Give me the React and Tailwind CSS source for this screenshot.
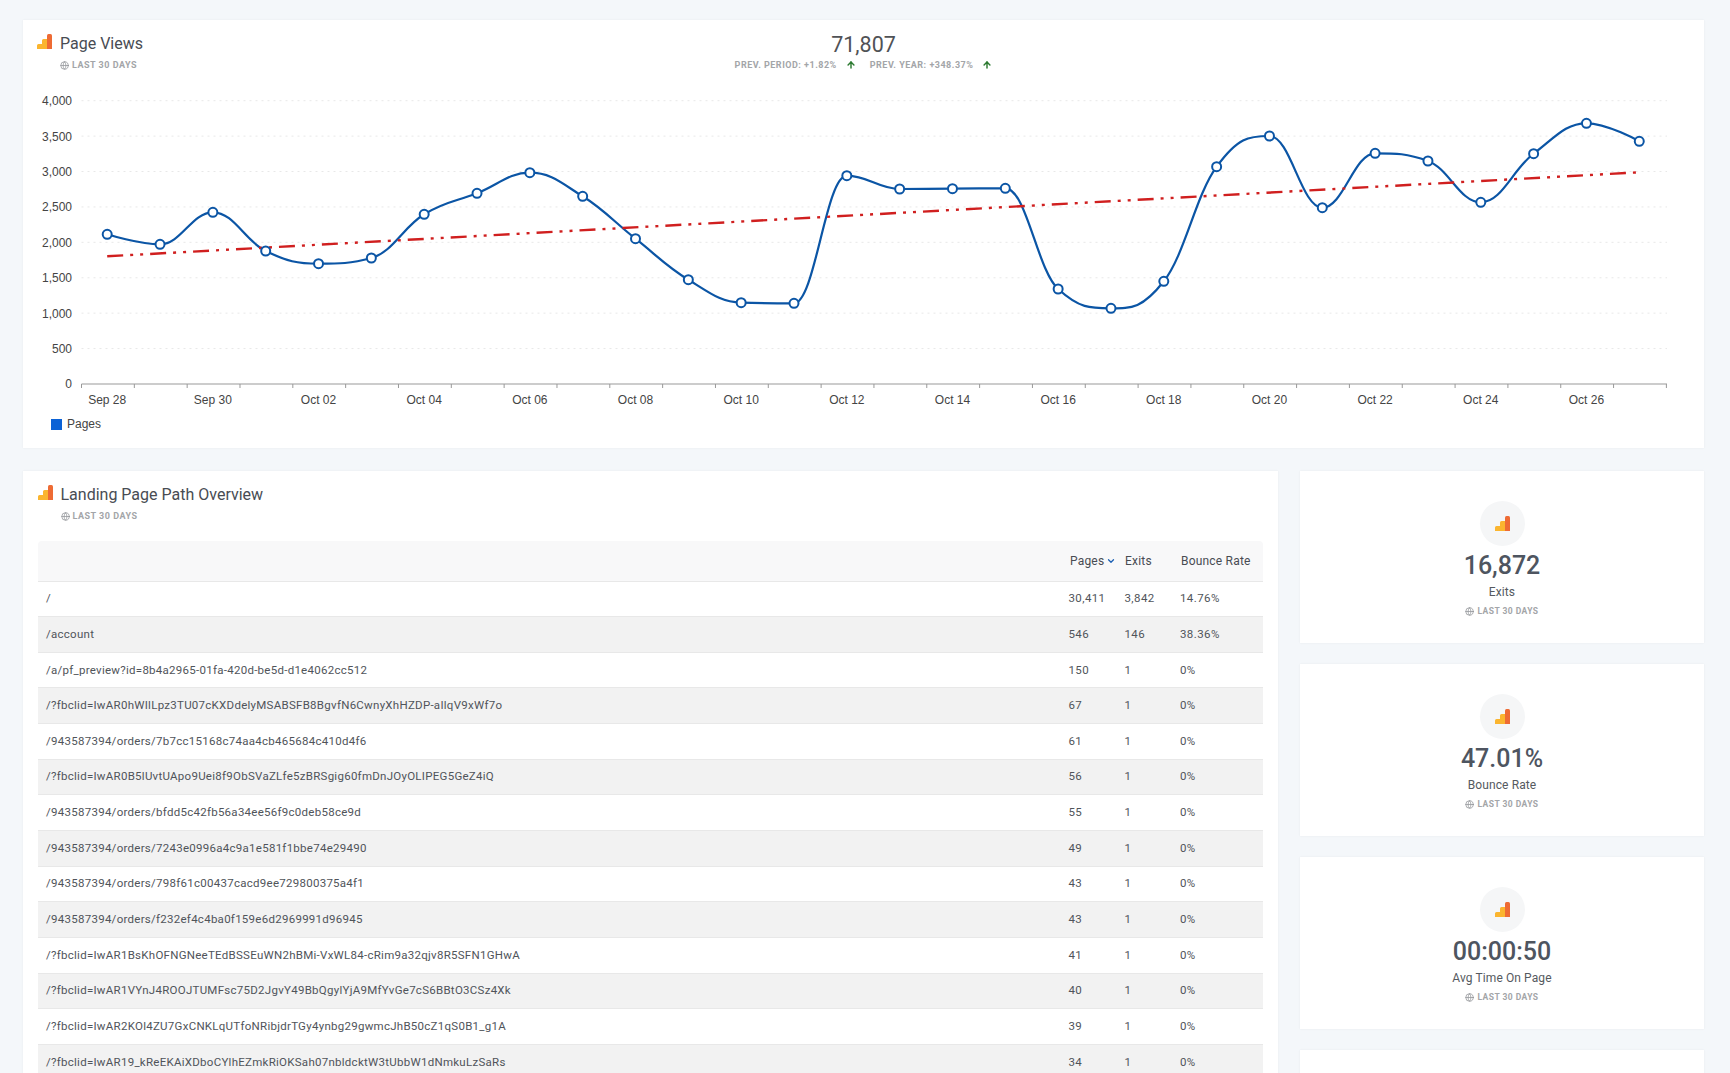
import React from "react";
import { ArrowUp, ChevronDown, Globe } from "lucide-react";

const pointY = [
  234.3, 244.3, 212.3, 251, 263.7, 258, 214.3, 193.3, 172.7, 196.3, 238.7, 279.7, 302.7, 303.3, 175.7,
  189, 188.7, 188.3, 289, 308.3, 281.3, 166.7, 136, 207.7, 153.3, 161, 202.3, 153.7, 123.3, 141.3,
];
const xLabels = [
  "Sep 28", "Sep 30", "Oct 02", "Oct 04", "Oct 06", "Oct 08", "Oct 10", "Oct 12",
  "Oct 14", "Oct 16", "Oct 18", "Oct 20", "Oct 22", "Oct 24", "Oct 26",
];
const yLabels = ["4,000", "3,500", "3,000", "2,500", "2,000", "1,500", "1,000", "500", "0"];

const rows = [
  ["/", "30,411", "3,842", "14.76%"],
  ["/account", "546", "146", "38.36%"],
  ["/a/pf_preview?id=8b4a2965-01fa-420d-be5d-d1e4062cc512", "150", "1", "0%"],
  ["/?fbclid=IwAR0hWIlLpz3TU07cKXDdelyMSABSFB8BgvfN6CwnyXhHZDP-aIlqV9xWf7o", "67", "1", "0%"],
  ["/943587394/orders/7b7cc15168c74aa4cb465684c410d4f6", "61", "1", "0%"],
  ["/?fbclid=IwAR0B5lUvtUApo9Uei8f9ObSVaZLfe5zBRSgig60fmDnJOyOLIPEG5GeZ4iQ", "56", "1", "0%"],
  ["/943587394/orders/bfdd5c42fb56a34ee56f9c0deb58ce9d", "55", "1", "0%"],
  ["/943587394/orders/7243e0996a4c9a1e581f1bbe74e29490", "49", "1", "0%"],
  ["/943587394/orders/798f61c00437cacd9ee729800375a4f1", "43", "1", "0%"],
  ["/943587394/orders/f232ef4c4ba0f159e6d2969991d96945", "43", "1", "0%"],
  ["/?fbclid=IwAR1BsKhOFNGNeeTEdBSSEuWN2hBMi-VxWL84-cRim9a32qjv8R5SFN1GHwA", "41", "1", "0%"],
  ["/?fbclid=IwAR1VYnJ4ROOJTUMFsc75D2JgvY49BbQgylYjA9MfYvGe7cS6BBtO3CSz4Xk", "40", "1", "0%"],
  ["/?fbclid=IwAR2KOl4ZU7GxCNKLqUTfoNRibjdrTGy4ynbg29gwmcJhB50cZ1qS0B1_g1A", "39", "1", "0%"],
  ["/?fbclid=IwAR19_kReEKAiXDboCYlhEZmkRiOKSah07nbldcktW3tUbbW1dNmkuLzSaRs", "34", "1", "0%"],
];

const stats = [
  { value: "16,872", label: "Exits" },
  { value: "47.01%", label: "Bounce Rate" },
  { value: "00:00:50", label: "Avg Time On Page" },
];

const STEP = 52.83;
const pointX = (i) => 107.2 + i * STEP;
const gridY = (i) => 100.7 + i * 35.41;

// highcharts style spline, smoothing 1.5
const controls = (i) => {
  const x = pointX(i);
  const y = pointY[i];
  if (i === 0 || i === pointY.length - 1) return [x, y, x, y];
  const lastY = pointY[i - 1];
  const nextY = pointY[i + 1];
  const lx = (1.5 * x + pointX(i - 1)) / 2.5;
  const rx = (1.5 * x + pointX(i + 1)) / 2.5;
  let ly = (1.5 * y + lastY) / 2.5;
  let ry = (1.5 * y + nextY) / 2.5;
  const fix = ((ry - ly) * (rx - x)) / (rx - lx) + y - ry;
  ly += fix;
  ry += fix;
  if (ly > lastY && ly > y) {
    ly = Math.max(lastY, y);
    ry = 2 * y - ly;
  } else if (ly < lastY && ly < y) {
    ly = Math.min(lastY, y);
    ry = 2 * y - ly;
  }
  if (ry > nextY && ry > y) {
    ry = Math.max(nextY, y);
    ly = 2 * y - ry;
  } else if (ry < nextY && ry < y) {
    ry = Math.min(nextY, y);
    ly = 2 * y - ry;
  }
  return [lx, ly, rx, ry];
};

const linePath = pointY.reduce((d, y, i) => {
  if (i === 0) return `M ${pointX(0)} ${y}`;
  const prev = controls(i - 1);
  const cur = controls(i);
  return `${d} C ${prev[2]} ${prev[3]} ${cur[0]} ${cur[1]} ${pointX(i)} ${y}`;
}, "");

const AnalyticsIcon = () => (
  <svg width="15" height="15" viewBox="0 0 15 15" className="shrink-0">
    <path d="M0 15V11.5Q0 10 1.5 10H5V6.5Q5 5 6.5 5H10V15Z" fill="#fbb52f" />
    <path d="M10 15V1.5Q10 0 11.5 0H13.5Q15 0 15 1.5V15Z" fill="#ee6b34" />
  </svg>
);

const RangeLabel = ({ small }) => (
  <div
    className={`flex h-[12px] items-center gap-[3px] leading-[12px] font-bold text-[#a3a5a8] ${
      small ? "text-[8.5px] tracking-[0.45px]" : "text-[9px] tracking-[0.5px]"
    }`}
  >
    <Globe size={9} strokeWidth={2} className="text-[#909397]" />
    <span>LAST 30 DAYS</span>
  </div>
);

const CardTitle = ({ title }) => (
  <div className="flex gap-[8px]">
    <AnalyticsIcon />
    <div>
      <div className="h-[20px] text-[16px] leading-[20px] text-[#484c53]">{title}</div>
      <div className="mt-[5px]">
        <RangeLabel />
      </div>
    </div>
  </div>
);

const Compare = ({ text }) => (
  <span className="flex items-center">
    <span>{text}</span>
    <ArrowUp size={10} strokeWidth={3.5} className="ml-[9px] text-[#2c7a30]" />
  </span>
);

const PageViewsChart = () => (
  <svg
    width="1681"
    height="320"
    viewBox="23 90 1681 320"
    className="block font-['Liberation_Sans',sans-serif] text-[12px]"
  >
    {yLabels.map((label, i) => (
      <g key={label}>
        {i < 8 && (
          <line x1="81.5" x2="1667" y1={gridY(i)} y2={gridY(i)} stroke="#e8e8e8" strokeDasharray="2 4" />
        )}
        <text x="72" y={gridY(i) + 4.5} textAnchor="end" fill="#444">
          {label}
        </text>
      </g>
    ))}
    <line x1="81.5" x2="1667" y1="384" y2="384" stroke="#999" />
    {Array.from({ length: 31 }, (_, i) => (
      <line key={i} x1={81.5 + i * STEP} x2={81.5 + i * STEP} y1="384" y2="388" stroke="#999" />
    ))}
    {xLabels.map((label, i) => (
      <text key={label} x={pointX(i * 2)} y="404" textAnchor="middle" fill="#444">
        {label}
      </text>
    ))}
    <path d={linePath} fill="none" stroke="#0b55a5" strokeWidth="2.2" />
    <line x1="107.2" y1="256.3" x2="1639.3" y2="172.3" stroke="#d01f1f" strokeWidth="2.4" strokeDasharray="16 7 3 7 3 7" />
    {pointY.map((y, i) => (
      <circle key={i} cx={pointX(i)} cy={y} r="4.5" fill="#fff" stroke="#0b55a5" strokeWidth="2" />
    ))}
  </svg>
);

const StatCard = ({ value, label }) => (
  <div className="flex h-[171.5px] flex-col items-center bg-white pt-[30px] shadow-[0_0_2px_rgba(0,0,0,0.06)]">
    <div className="flex size-[45px] items-center justify-center rounded-full bg-[#f5f6f7]">
      <AnalyticsIcon />
    </div>
    <div className="mt-[5px] h-[30px] text-[25px] leading-[30px] font-medium text-[#4e5560]">{value}</div>
    <div className="mt-[3px] h-[16px] text-[12px] leading-[16px] text-[#555a60] tracking-[0.1px]">{label}</div>
    <div className="mt-[5px]">
      <RangeLabel small />
    </div>
  </div>
);

const App = () => {
  return (
    <div className="h-[1073px] overflow-hidden bg-[#f4f7fa] pt-[20px] pl-[23px] pr-[26px] font-['Roboto',sans-serif]">
      <section className="h-[428px] bg-white shadow-[0_0_2px_rgba(0,0,0,0.06)]">
        <div className="grid h-[70px] grid-cols-[1fr_auto_1fr] px-[14px]">
          <div className="pt-[14px]">
            <CardTitle title="Page Views" />
          </div>
          <div className="flex flex-col items-center pt-[13px]">
            <div className="h-[24px] text-[21.5px] leading-[24px] text-[#505256]">71,807</div>
            <div className="mt-[2px] flex h-[12px] gap-[14px] text-[9px] leading-[12px] font-bold tracking-[0.5px] text-[#a3a5a8]">
              <Compare text="PREV. PERIOD: +1.82%" />
              <Compare text="PREV. YEAR: +348.37%" />
            </div>
          </div>
        </div>
        <PageViewsChart />
        <div className="mt-[7px] flex items-center gap-[5px] pl-[28px] font-['Liberation_Sans',sans-serif] text-[12px] leading-[14px] text-[#444]">
          <span className="size-[11px] bg-[#0b62d6]" />
          <span>Pages</span>
        </div>
      </section>

      <div className="mt-[23px] flex gap-[22.5px]">
        <section className="h-[700px] w-[1254.5px] shrink-0 bg-white px-[14.5px] pt-[14px] shadow-[0_0_2px_rgba(0,0,0,0.06)]">
          <div className="h-[56px]">
            <CardTitle title="Landing Page Path Overview" />
          </div>
          <div className="flex h-[40.5px] items-center rounded-t-[4px] border-b border-[#e8e8e8] bg-[#f8f8f9] text-[12px] text-[#484c53] tracking-[0.2px]">
            <div className="flex-1" />
            <div className="flex w-[55px] items-center gap-[2px]">
              Pages
              <ChevronDown size={10} strokeWidth={3} className="text-[#1a5fb4]" />
            </div>
            <div className="w-[56px]">Exits</div>
            <div className="w-[82px]">Bounce Rate</div>
          </div>
          {rows.map((row, i) => (
            <div
              key={row[0]}
              className={`flex h-[35.67px] items-center border-b border-[#e8e8e8] text-[11.5px] text-[#50545a] ${
                i % 2 === 1 ? "bg-[#f2f2f2]" : "bg-white"
              }`}
            >
              <div className="flex-1 pl-[8.5px] tracking-[0.27px]">{row[0]}</div>
              <div className="w-[56px] tracking-[0.4px]">{row[1]}</div>
              <div className="w-[55.5px] tracking-[0.4px]">{row[2]}</div>
              <div className="w-[83px] tracking-[0.4px]">{row[3]}</div>
            </div>
          ))}
        </section>

        <aside className="flex flex-1 flex-col gap-[21.5px]">
          {stats.map((stat) => (
            <StatCard key={stat.label} value={stat.value} label={stat.label} />
          ))}
          <div className="h-[171.5px] shrink-0 bg-white shadow-[0_0_2px_rgba(0,0,0,0.06)]" />
        </aside>
      </div>
    </div>
  );
};

export default App;
